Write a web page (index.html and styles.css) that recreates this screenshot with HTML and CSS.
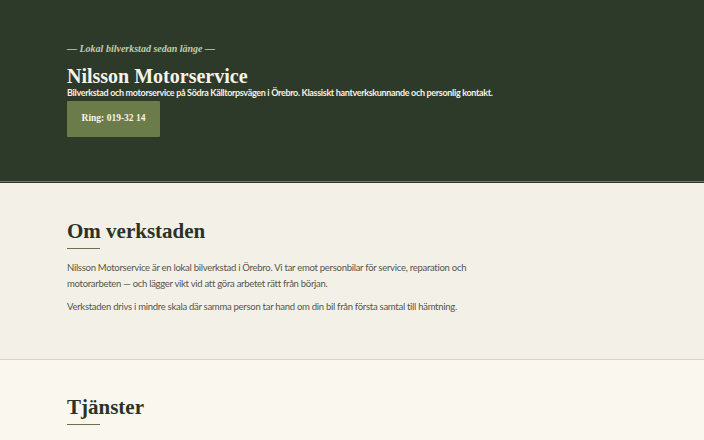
FILE: index.html
```html
<!DOCTYPE html>
<html lang="sv">
<head>
  <meta charset="UTF-8" />
  <meta name="viewport" content="width=device-width, initial-scale=1" />
  <title>Nilsson Motorservice</title>
  <link rel="stylesheet" href="styles.css">
</head>
<body>
  <header class="hero">
    <div class="wrap">
      <p class="tagline">— Lokal bilverkstad sedan länge —</p>
      <h1>Nilsson Motorservice</h1>
      <p class="lead">Bilverkstad och motorservice på Södra Källtorpsvägen i Örebro. Klassiskt hantverkskunnande och personlig kontakt.</p>
      <a class="button" href="tel:0193214">Ring: 019-32 14</a>
    </div>
  </header>

  <section class="section about">
    <div class="wrap">
      <h2>Om verkstaden</h2>
      <p>Nilsson Motorservice är en lokal bilverkstad i Örebro. Vi tar emot personbilar för service, reparation och motorarbeten — och lägger vikt vid att göra arbetet rätt från början.</p>
      <p>Verkstaden drivs i mindre skala där samma person tar hand om din bil från första samtal till hämtning.</p>
    </div>
  </section>

  <section class="section services">
    <div class="wrap">
      <h2>Tjänster</h2>
    </div>
  </section>
</body>
</html>
```

FILE: styles.css
```css
body {
  margin: 0;
  font-family: 'Lato', sans-serif;
  color: #55554d;
  background: #faf7ef;
}
.wrap {
  max-width: 570px;
  margin: 0 auto;
}
.hero {
  background: #2d3a2a;
  color: #f4f1e8;
  padding: 42px 0 45px;
  border-bottom: 1px solid #2d3a2a;
  box-shadow: inset 0 -1px 0 #6f7f4c;
}
.tagline {
  margin: 0;
  font-family: 'Liberation Serif', serif;
  font-style: italic;
  font-weight: 700;
  font-size: 10px;
  line-height: 14px;
  color: #c3cbb0;
}
h1 {
  margin: 9px 0 0;
  font-family: 'Liberation Serif', serif;
  font-size: 20px;
  line-height: 22px;
  color: #f6f3ea;
}
.lead {
  margin: 0;
  font-size: 9px;
  line-height: 11px;
  font-weight: 700;
  letter-spacing: -0.33px;
}
.button {
  display: inline-block;
  margin-top: 3px;
  width: 93px;
  padding: 11px 0 12px;
  background: #6b7b4a;
  color: #f6f3ea;
  font-family: 'Liberation Serif', serif;
  font-weight: 700;
  font-size: 9.5px;
  line-height: 13px;
  text-align: center;
  text-decoration: none;
  border-radius: 1px;
}
.section {
  padding: 35px 0 44px;
}
.about {
  background: #f3f0e8;
  border-bottom: 1px solid #d9d3c5;
}
.services {
  padding-top: 34px;
}
h2 {
  margin: 0;
  font-family: 'Liberation Serif', serif;
  font-weight: 700;
  font-size: 21px;
  line-height: 26px;
  color: #2a3327;
}
h2::after {
  content: "";
  display: block;
  width: 33px;
  height: 1px;
  margin-top: 4px;
  background: #6b7148;
}
.section p {
  margin: 11px 0 0;
  max-width: 420px;
  font-size: 9.5px;
  line-height: 16px;
  letter-spacing: -0.28px;
}
.section p + p {
  margin-top: 7px;
}
```
